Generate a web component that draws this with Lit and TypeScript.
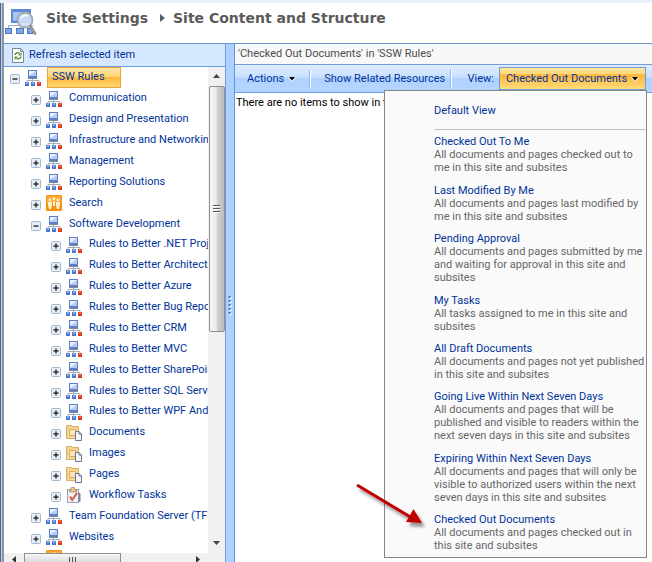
import { LitElement, html, css, svg, nothing } from "lit";
import { customElement, property } from "lit/decorators.js";
import { classMap } from "lit/directives/class-map.js";

type IconKind = "site" | "search" | "folder" | "tasks";

interface TreeNode {
  label: string;
  level: 0 | 1 | 2;
  icon: IconKind;
  open?: boolean;
  selected?: boolean;
}

interface ViewItem {
  title: string;
  lines: string[];
}

const NODES: TreeNode[] = [
  { label: "SSW Rules", level: 0, icon: "site", open: true, selected: true },
  { label: "Communication", level: 1, icon: "site" },
  { label: "Design and Presentation", level: 1, icon: "site" },
  { label: "Infrastructure and Networking", level: 1, icon: "site" },
  { label: "Management", level: 1, icon: "site" },
  { label: "Reporting Solutions", level: 1, icon: "site" },
  { label: "Search", level: 1, icon: "search" },
  { label: "Software Development", level: 1, icon: "site", open: true },
  { label: "Rules to Better .NET Projects", level: 2, icon: "site" },
  { label: "Rules to Better Architecture", level: 2, icon: "site" },
  { label: "Rules to Better Azure", level: 2, icon: "site" },
  { label: "Rules to Better Bug Reports", level: 2, icon: "site" },
  { label: "Rules to Better CRM", level: 2, icon: "site" },
  { label: "Rules to Better MVC", level: 2, icon: "site" },
  { label: "Rules to Better SharePoint", level: 2, icon: "site" },
  { label: "Rules to Better SQL Server", level: 2, icon: "site" },
  { label: "Rules to Better WPF And", level: 2, icon: "site" },
  { label: "Documents", level: 2, icon: "folder" },
  { label: "Images", level: 2, icon: "folder" },
  { label: "Pages", level: 2, icon: "folder" },
  { label: "Workflow Tasks", level: 2, icon: "tasks" },
  { label: "Team Foundation Server (TFS)", level: 1, icon: "site" },
  { label: "Websites", level: 1, icon: "site" },
  { label: "", level: 1, icon: "search" },
];

const VIEWS: ViewItem[] = [
  { title: "Checked Out To Me", lines: ["All documents and pages checked out to", "me in this site and subsites"] },
  { title: "Last Modified By Me", lines: ["All documents and pages last modified by", "me in this site and subsites"] },
  { title: "Pending Approval", lines: ["All documents and pages submitted by me", "and waiting for approval in this site and", "subsites"] },
  { title: "My Tasks", lines: ["All tasks assigned to me in this site and", "subsites"] },
  { title: "All Draft Documents", lines: ["All documents and pages not yet published", "in this site and subsites"] },
  { title: "Going Live Within Next Seven Days", lines: ["All documents and pages that will be", "published and visible to readers within the", "next seven days in this site and subsites"] },
  { title: "Expiring Within Next Seven Days", lines: ["All documents and pages that will only be", "visible to authorized users within the next", "seven days in this site and subsites"] },
  { title: "Checked Out Documents", lines: ["All documents and pages checked out in", "this site and subsites"] },
];

const ICONS = {
  site: svg`
    <rect x="3" y="0" width="9" height="8" fill="#5f7fc4"/>
    <rect x="4" y="1" width="7" height="5" fill="#b4ccf6"/>
    <path d="M4 1h7L4 5.500z" fill="#eaf2fe"/>
    <path d="M3 8h9v1H3z" fill="#7c879c"/>
    <path d="M7.500 9v3M2 12v-1.500h12V12" stroke="#a3abba" fill="none"/>
    <rect x="0" y="12" width="4" height="4" fill="#4a77d4"/><rect x="1" y="12" width="2" height="2" fill="#86abf0"/>
    <rect x="6" y="12" width="4" height="4" fill="#4a77d4"/><rect x="7" y="12" width="2" height="2" fill="#86abf0"/>
    <rect x="12" y="12" width="4" height="4" fill="#d63a22"/><rect x="13" y="12" width="2" height="2" fill="#ec6a4c"/>`,
  search: svg`
    <rect x="0" y="0" width="16" height="16" rx="1" fill="#f7930f"/>
    <rect x="1" y="1" width="14" height="7" fill="#fba838"/>
    <g fill="#fff2cf"><circle cx="4" cy="5" r="1.4"/><circle cx="12" cy="5" r="1.4"/><circle cx="8" cy="3.6" r="1.4"/>
    <path d="M2 7h4v3l-1 4H3l-1-4zM10 7h4v3l-1 4h-2l-1-4zM7 6h2v5H7z"/></g>`,
  folder: svg`
    <path d="M0.500 0.500h5l1 1h6v12h-12z" fill="#f5d597" stroke="#d9ae63"/>
    <path d="M3.500 4.500h6v6h-6z" fill="#fbe6b8" stroke="#d8ad60"/>
    <path d="M9.500 6.500h3.500l2.500 2.500v6.500h-6z" fill="#f4f7fc" stroke="#69788f"/>
    <path d="M13 6.500v2.500h2.500" fill="none" stroke="#69788f"/>`,
  tasks: svg`
    <rect x="1.500" y="2.500" width="11" height="13" fill="#eef1f7" stroke="#9aa1b2"/>
    <path d="M12.500 5l2 1.500v8l-2 1z" fill="#7b8499"/>
    <path d="M3.500 3H5l.5-2.500h3L9 3h1.500v2h-7z" fill="#e5c98a" stroke="#9b8450" stroke-width=".7"/>
    <path d="M4 9.500l2.200 3.500L11 6" fill="none" stroke="#e2563c" stroke-width="2"/>`,
};

const iconOf = (kind: IconKind) =>
  html`<svg class="icon" viewBox="0 0 16 16" aria-hidden="true">${ICONS[kind]}</svg>`;

const caret = html`<svg class="caret" viewBox="0 0 8 6" aria-hidden="true">
  <path d="M0 1h8L4 6z" fill="#fff" opacity=".8"/><path d="M1 1h6L4 4.500z" fill="#000"/></svg>`;

@customElement("site-tree")
class SiteTree extends LitElement {
  @property({ attribute: false }) nodes: TreeNode[] = [];

  static styles = css`
    :host { display: block; flex: 1; min-width: 0; overflow: hidden; }
    .list { display: grid; grid-auto-rows: 1fr; height: 501px; margin: 0; padding: 0; list-style: none; }
    .row { display: flex; align-items: center; min-height: 0; white-space: nowrap; }
    .level0 { padding-left: 6px; }
    .level1 { padding-left: 27px; }
    .level2 { padding-left: 47px; }
    .toggle { flex: none; width: 10px; height: 10px; margin: 4px 5px 0 0; padding: 0; border: 0; background: none; }
    .glyph { display: block; width: 10px; height: 10px; }
    .icon { flex: none; width: 16px; height: 16px; margin-top: 1px; }
    .link { margin-left: 7px; color: #003399; text-decoration: none; line-height: 14px; }
    .selected { box-sizing: border-box; width: 74px; height: 21px; margin-left: 6px; padding: 2px 0 0 4px; border: 1px solid #e8a33c;
      background: linear-gradient(#ffe7a8, #ffd573 45%, #ffb83c 50%, #ffd96e); }
  `;

  render() {
    return html`<ul class="list">
      ${this.nodes.map((n) => html`
        <li class="row level${n.level}">
          <button class="toggle" aria-label=${n.open ? "Collapse" : "Expand"}>
            <svg class="glyph" viewBox="0 0 10 10">
              <rect x="0.500" y="0.500" width="9" height="9" rx="1" fill="#e6edf5" stroke="#9fb9d3"/>
              <path d="M2.500 5h5" stroke="#333" stroke-width="1.500"/>
              ${n.open ? nothing : svg`<path d="M5 2.500v5" stroke="#333" stroke-width="1.500"/>`}
            </svg>
          </button>
          ${iconOf(n.icon)}
          ${n.label ? html`<a class=${classMap({ link: true, selected: !!n.selected })} href="#">${n.label}</a>` : nothing}
        </li>`)}
    </ul>`;
  }
}

@customElement("view-menu")
class ViewMenu extends LitElement {
  static styles = css`
    :host { display: block; box-sizing: border-box; width: 263px; height: 468px; padding: 13px 0 5px;
      border: 1px solid #868686; background: #fafafa; }
    .menu { display: flex; flex-direction: column; justify-content: space-between; height: 100%; }
    .item { display: block; margin-left: 49px; color: #003399; text-decoration: none; line-height: 13px; white-space: nowrap; }
    .first { padding-bottom: 12px; border-bottom: 1px solid #c0c0c0; margin-bottom: -4px; }
    .line { display: block; color: #666; }
  `;

  render() {
    return html`<div class="menu">
      <a class="item first" href="#">Default View</a>
      ${VIEWS.map((v) => html`<a class="item" href="#">${v.title}${v.lines.map((l) => html`<span class="line">${l}</span>`)}</a>`)}
    </div>`;
  }
}

@customElement("app-root")
class AppRoot extends LitElement {
  static styles = css`
    :host { display: flex; flex-direction: column; position: relative; box-sizing: border-box; height: 100vh; overflow: hidden;
      border-top: 3px solid #e8f1fd; background: #fff; color: #000;
      font: 11px/14px Roboto, Tahoma, "Liberation Sans", sans-serif; }
    .frame { display: flex; flex: 1; min-height: 0; }
    .edge { flex: none; width: 1px; border-right: 2px solid #8d949d; border-left: 1px solid #4c6c98; background: #b9cde6; }
    .page { display: flex; flex: 1; flex-direction: column; min-width: 0; }
    .header { display: flex; align-items: center; flex: none; height: 40px; border-bottom: 1px solid #6699cc; }
    .logo { width: 34px; height: 28px; margin-left: 1px; }
    .title { display: flex; align-items: center; margin: 0 0 11px 7px; color: #5b5b5b; white-space: nowrap;
      font: bold 14px/18px "DejaVu Sans", Verdana, sans-serif; }
    .chevron { width: 5px; height: 8px; margin: 0 8px 0 12px; }
    .body { display: flex; flex: 1; min-height: 0; }
    .side { display: flex; flex: none; flex-direction: column; width: 221px; border-right: 1px solid #6f9ddb; }
    .refresh { display: flex; align-items: center; flex: none; height: 23px; padding: 0 0 0 8px; gap: 5px;
      border: 0; border-bottom: 1px solid #6f9ddb; background: #d6e8ff; color: #003399; font: inherit; }
    .page-icon { width: 12px; height: 15px; }
    .tree-area { display: flex; flex: 1; min-height: 0; }
    .vbar { display: flex; flex: none; flex-direction: column; align-items: center; width: 17px; background: #f0f0f0; }
    .arrow { flex: none; width: 7px; height: 4px; margin: 7px 0 8px; }
    .vthumb { display: flex; align-items: center; justify-content: center; box-sizing: border-box; width: 16px; height: 246px;
      border: 1px solid #8f8f8f; border-radius: 2px; background: linear-gradient(90deg, #f7f7f7, #e9e9eb 45%, #cfcfd2 55%, #bcbcc0); }
    .grip { width: 8px; height: 8px; }
    .space { flex: 1; }
    .hbar { display: flex; flex: none; align-items: center; height: 9px; overflow: hidden; background: #f0f0f0; }
    .harrow { flex: none; width: 4px; height: 7px; margin: 3px 8px 0; }
    .hthumb { display: flex; justify-content: center; box-sizing: border-box; width: 97px; height: 9px; padding-top: 3px;
      border: 1px solid #8f8f8f; border-bottom: 0; background: linear-gradient(#f7f7f7, #dcdcde); }
    .hgrip { width: 8px; height: 6px; }
    .corner { width: 17px; }
    .splitter { display: flex; align-items: center; justify-content: center; box-sizing: border-box; flex: none; width: 9px;
      padding-top: 6px; border-right: 1px solid #5b95e0; background: #aed1ff; }
    .dots { width: 4px; height: 20px; }
    .main { display: flex; flex: 1; flex-direction: column; min-width: 0; }
    .caption { flex: none; height: 20px; padding-left: 3px; border-bottom: 1px solid #6f9ddb; background: #f8f8f8; color: #4c4c4c;
      line-height: 20px; }
    .toolbar { display: flex; align-items: center; flex: none; height: 27px; border-bottom: 1px solid #6f9ddb; color: #003399;
      background: linear-gradient(#e0eeff, #c8e0ff 45%, #b0d2ff 50%, #b4d5ff); white-space: nowrap; }
    .tool { display: flex; align-items: center; gap: 4px; padding: 0; border: 0; background: none; color: #003399; font: inherit; }
    .actions { margin-left: 12px; }
    .related { margin-left: 13px; }
    .caret { width: 8px; height: 6px; }
    .bar { width: 1px; height: 18px; border-right: 1px solid #fff; background: #8fb8f0; }
    .bar-a { margin-left: 13px; }
    .bar-b { margin-left: 5px; }
    .view { margin-left: auto; }
    .picker { position: relative; align-self: flex-start; margin: 2px 6px 0 5px; }
    .current { box-sizing: border-box; width: 147px; height: 23px; justify-content: center; border: 1px solid #6f9ddb;
      background: linear-gradient(#ffe7a0, #ffd67a 28%, #ffb43a 32%, #ffdc78); }
    .popup { position: absolute; top: 23px; right: -1px; z-index: 1; }
    .empty { margin: 0; padding: 3px 1px; }
    .pointer { position: absolute; top: 476px; left: 350px; z-index: 2; width: 84px; height: 60px; pointer-events: none; }
  `;

  render() {
    return html`
      <div class="frame">
        <div class="edge"></div>
        <div class="page">
          <header class="header">
            <svg class="logo" viewBox="0 0 34 28" aria-hidden="true">
              <rect x="6" y="0" width="20" height="14" fill="#5e87d6"/><path d="M8 3h16v9H8z" fill="#a8c6f5"/><path d="M8 12l16-7v7z" fill="#8db2ef"/>
              <path d="M3.500 19v-2.500H28M15.500 14v5" fill="none" stroke="#8fa3c8"/>
              <g fill="#7ea6ec" stroke="#5377bd"><rect x=".5" y="19.500" width="6" height="5"/><rect x="11.500" y="19.500" width="7" height="5"/><rect x="22.500" y="19.500" width="5" height="5"/></g>
              <circle cx="20" cy="11" r="7.500" fill="#cfe0f6" fill-opacity=".9" stroke="#a3a8af" stroke-width="1.800"/>
              <path d="M16 9q3-4 7-2" fill="none" stroke="#fff" stroke-width="1.800"/>
              <path d="M25.500 17.500l4.500 7" stroke="#94979c" stroke-width="3" stroke-linecap="round"/>
            </svg>
            <h1 class="title">Site Settings
              <svg class="chevron" viewBox="0 0 5 8" aria-hidden="true"><path d="M0 0l5 4-5 4z" fill="#4f5f70"/></svg>
              Site Content and Structure</h1>
          </header>
          <div class="body">
            <aside class="side">
              <button class="refresh">
                <svg class="page-icon" viewBox="0 0 12 15" aria-hidden="true">
                  <path d="M.5.5h8l3 3v11H.5z" fill="#fff" stroke="#7a8797"/><path d="M8.500.5v3h3" fill="none" stroke="#7a8797"/>
                  <path d="M3 7c0-2 3-3 4.500-1.500M9 8.500c0 2-3 3-4.500 1.500" fill="none" stroke="#5a9a46" stroke-width="1.600"/>
                  <path d="M9.500 4v3.500H6zM2.500 12V8.500H6z" fill="#5a9a46"/>
                </svg>Refresh selected item</button>
              <div class="tree-area">
                <site-tree .nodes=${NODES}></site-tree>
                <div class="vbar">
                  <svg class="arrow" viewBox="0 0 7 4"><path d="M0 4L3.500 0 7 4z" fill="#444"/></svg>
                  <div class="vthumb"><svg class="grip" viewBox="0 0 8 8"><path d="M0 .5h7M0 3.500h7M0 6.500h7" stroke="#555"/><path d="M0 1.500h7M0 4.500h7M0 7.500h7" stroke="#fff"/></svg></div>
                  <div class="space"></div>
                  <svg class="arrow" viewBox="0 0 7 4"><path d="M0 0h7L3.500 4z" fill="#444"/></svg>
                </div>
              </div>
              <div class="hbar">
                <svg class="harrow" viewBox="0 0 4 7"><path d="M4 0v7L0 3.500z" fill="#333"/></svg>
                <div class="hthumb"><svg class="hgrip" viewBox="0 0 8 6"><path d="M.5 0v6M3.500 0v6M6.500 0v6" stroke="#555"/></svg></div>
                <div class="space"></div>
                <svg class="harrow" viewBox="0 0 4 7"><path d="M0 0v7l4-3.500z" fill="#333"/></svg>
                <div class="corner"></div>
              </div>
            </aside>
            <div class="splitter"><svg class="dots" viewBox="0 0 4 20">
              <path d="M2.500 1v19" stroke="#fff" stroke-width="2" stroke-dasharray="2 2"/><path d="M1.500 0v20" stroke="#3f74c8" stroke-width="2" stroke-dasharray="2 2"/></svg></div>
            <main class="main">
              <div class="caption">'Checked Out Documents' in 'SSW Rules'</div>
              <div class="toolbar">
                <button class="tool actions">Actions ${caret}</button>
                <div class="bar bar-a"></div>
                <button class="tool related">Show Related Resources</button>
                <div class="bar bar-b"></div>
                <span class="view" id="view-label">View:</span>
                <div class="picker">
                  <button class="tool current" aria-haspopup="true" aria-expanded="true" aria-describedby="view-label">Checked Out Documents ${caret}</button>
                  <view-menu class="popup"></view-menu>
                </div>
              </div>
              <p class="empty">There are no items to show in this view.</p>
            </main>
          </div>
        </div>
      </div>
      <svg class="pointer" viewBox="0 0 84 60" aria-hidden="true">
        <defs><filter id="soft" x="-20%" y="-20%" width="150%" height="150%"><feDropShadow dx="3" dy="4" stdDeviation="1.500" flood-color="#000" flood-opacity=".4"/></filter></defs>
        <g filter="url(#soft)"><path d="M7 6L62 39" stroke="#c00000" stroke-width="3"/><path d="M72 44L56 43l7.500-13z" fill="#c00000"/></g>
      </svg>`;
  }
}
